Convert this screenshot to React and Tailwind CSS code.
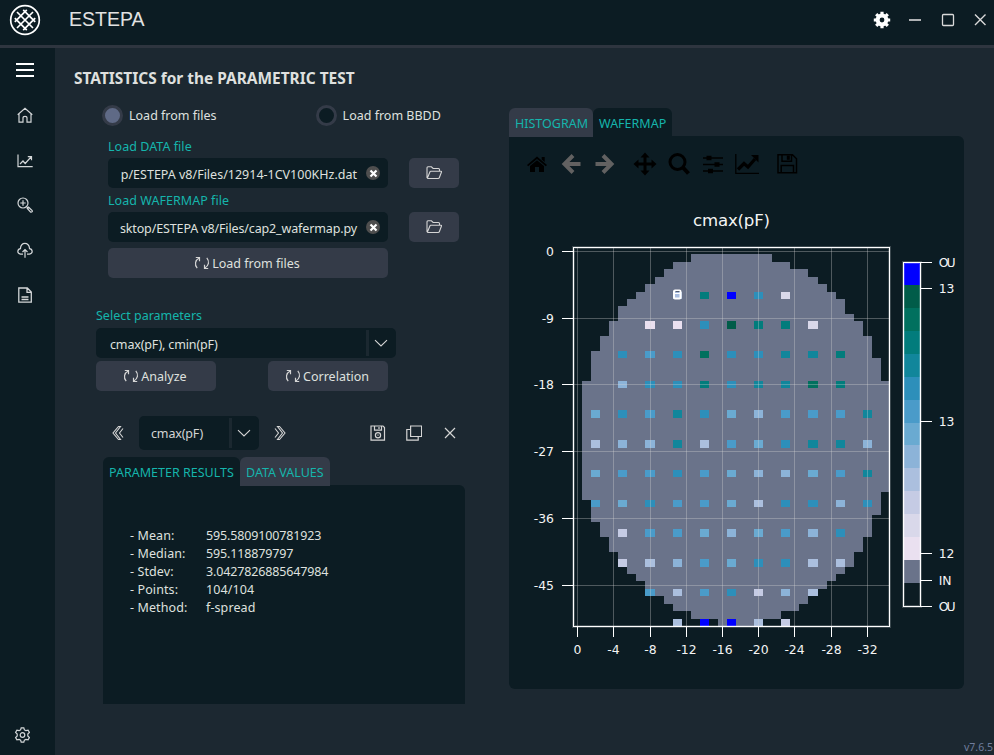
import React from 'react';

const COLORS = {
  B: '#0000ff', 1: '#015c49', 2: '#01705e', 3: '#027c7c', 4: '#11869b', 5: '#2d8fba', 6: '#4a9bc9',
  7: '#6aaad1', 8: '#8cb3d8', 9: '#abbfde', a: '#c5cbe4', b: '#d9d8ea', c: '#eae0f0',
};
const COL_X = [591, 618, 645, 673, 700, 727, 754, 781, 808, 836, 863];
const COL_W = [9, 9, 10, 9, 9, 9, 9, 9, 10, 9, 9];
const ROWS = [
  [292, 7, '...93B5b...'],
  [321, 8, '..cc5133b..'],
  [351, 7, '.565255443.'],
  [381, 7, '.855354423.'],
  [410, 8, '75645786664'],
  [440, 8, '98849675448'],
  [470, 7, '76656788764'],
  [500, 7, '67566795585'],
  [529, 8, '.a66787685.'],
  [559, 8, '.a98675599.'],
  [589, 7, '..6965a89..'],
  [619, 7, '...9BB9a...'],
];
const WAFER = [
  [254, 691, 772], [262, 673, 790], [269, 664, 808], [277, 655, 818], [284, 645, 827], [292, 636, 836],
  [299, 627, 845], [306, 618, 845], [314, 618, 854], [321, 609, 863], [336, 600, 872], [351, 591, 872],
  [358, 591, 881], [381, 582, 889], [492, 582, 881], [500, 591, 881], [515, 591, 872], [522, 600, 872],
  [537, 609, 863], [552, 618, 854], [567, 627, 845], [574, 636, 836], [581, 645, 827], [589, 645, 818],
  [596, 664, 808], [604, 673, 799], [611, 691, 781], [619, 718, 754], [626, 0, 0],
];
const XT = [577.5, 613.5, 650.5, 686.5, 722.5, 758.5, 794.5, 831.5, 867.5];
const YT = [251.5, 318.5, 384.5, 451.5, 518.5, 585.5];
const BAR = [263, 285, 308, 331, 354, 377, 400, 423, 445, 468, 491, 514, 537, 560, 583, 606];
const BAR_COLORS = ['#0000ff', '#015c49', '#01705e', '#027c7c', '#11869b', '#2d8fba', '#4a9bc9', '#6aaad1', '#8cb3d8', '#abbfde', '#c5cbe4', '#d9d8ea', '#eae0f0', '#6a738a', '#0c1c23'];
const BAR_TICKS = [[262.5, 'OU'], [288.5, '13'], [421.5, '13'], [553.5, '12'], [580.5, 'IN'], [606.5, 'OU']];

function WaferChart() {
  return (
    <svg width="448" height="476" viewBox="509 200 448 476" className="block font-['DejaVu_Sans',sans-serif]" fill="#f4f4f4">
      <text x="731.5" y="226" fontSize="16.6" textAnchor="middle" textLength="77">cmax(pF)</text>
      <g shapeRendering="crispEdges">
        {WAFER.slice(0, -1).map(([y, x1, x2], i) => (
          <rect key={y} x={x1} y={y} width={x2 - x1} height={WAFER[i + 1][0] - y} fill="#6a738a" />
        ))}
        {ROWS.map(([y, h, cells]) => [...cells].map((c, i) => c !== '.' && (
          <rect key={y + '-' + i} x={COL_X[i]} y={y} width={COL_W[i]} height={h} fill={COLORS[c]} />
        )))}
        <g fill="#d9d9d9" fillOpacity="0.33">
          {XT.map((x) => <rect key={x} x={x - 0.5} y="248" width="1" height="378" />)}
          {YT.map((y) => <rect key={y} x="574" y={y - 0.5} width="315" height="1" />)}
        </g>
        <rect x="573.5" y="247.5" width="316" height="379" fill="none" stroke="#fff" strokeOpacity="0.2" strokeWidth="3" />
        <rect x="573.5" y="247.5" width="316" height="379" fill="none" stroke="#fff" />
        {XT.map((x) => <rect key={x} x={x - 0.5} y="627" width="1" height="10" fill="#fff" />)}
        {YT.map((y) => <rect key={y} x="562" y={y - 0.5} width="11" height="1" fill="#fff" />)}
        {BAR_COLORS.map((c, i) => <rect key={c} x="904" y={BAR[i]} width="16" height={BAR[i + 1] - BAR[i]} fill={c} />)}
        <rect x="903.5" y="262.5" width="17" height="344" fill="none" stroke="#fff" strokeOpacity="0.2" strokeWidth="3" />
        <rect x="903.5" y="262.5" width="17" height="344" fill="none" stroke="#fff" />
        {BAR_TICKS.map(([y]) => <rect key={y} x="921" y={y - 0.5} width="11" height="1" fill="#fff" />)}
      </g>
      <rect x="674" y="290.5" width="6.500" height="8" rx="1" fill="#a9bde0" stroke="#fff" strokeWidth="2" />
      <path d="M675 293.5h5" stroke="#fff" />
      <path d="M675.5 291.5h4" stroke="#555e72" />
      <g fontSize="12.4">
        {XT.map((x, i) => <text key={x} x={x} y="654" textAnchor="middle">{i === 0 ? '0' : String(-4 * i)}</text>)}
        {YT.map((y, i) => <text key={y} x="554" y={y + 4.5} textAnchor="end">{i === 0 ? '0' : String(-9 * i)}</text>)}
        {BAR_TICKS.map(([y, t]) => <text key={y} x="938.7" y={y + 4.5} textLength={t === 'OU' ? 17 : undefined}>{t}</text>)}
      </g>
    </svg>
  );
}

function Icon({ size = 16, children, className = '', sw = 1, box = 16 }) {
  return (
    <svg width={size} height={size} viewBox={`0 0 ${box} ${box}`} fill="none" stroke="currentColor" strokeWidth={sw} className={`block shrink-0 ${className}`}>
      {children}
    </svg>
  );
}

const Folder = () => (
  <Icon className="-ml-px text-[#d5d5d5]" sw={1.1}>
    <path d="M1 13V2.800q0-1 1-1H5.400l1.700 1.700h5.400q1 0 1 1v1.700M1.200 13.500 4 6.700q.2-.5.8-.5h10q1 0 .7.800l-2.200 5.700q-.3.800-1.100.800H1.200" />
  </Icon>
);

const Sync = () => (
  <Icon className="text-[#d5d5d5]" sw={1.2}>
    <path d="M3.200 13.200C.2 9.700 1.200 5 5.200 3M1.800 2.500h3.700v3.700M12.800 2.800c3 3.500 2 8.200-2 10.200M14.200 13.500h-3.700V9.800" />
  </Icon>
);

function FileField({ label, value, tight }) {
  return (
    <div className="flex h-[54px] flex-col">
      <div className="h-[23px] pt-[2px] leading-[20px] tracking-[0.04px] text-[#15b5ac]">{label}</div>
      <div className="flex gap-[21px]">
        <div className="flex h-[30px] w-[280px] items-center rounded-[5px] bg-[#0c1c23] pl-[11px]">
          <div className={`flex h-5 w-[238px] justify-end whitespace-nowrap leading-[24px] ${tight ? 'tracking-[-0.130px]' : ''}`}>{value}</div>
          <div className="ml-[9px] flex h-[14px] w-[14px] items-center justify-center rounded-full bg-[#4e4e4e]">
            <Icon size={9} box={9} sw={2.2} className="text-white"><path d="m1.500 1.500 6 6M7.500 1.500l-6 6" /></Icon>
          </div>
        </div>
        <div className="flex h-[30px] w-[50px] items-center justify-center rounded-[5px] bg-[#343b48]"><Folder /></div>
      </div>
    </div>
  );
}

function Button({ children, className }) {
  return (
    <div className={`flex h-[30px] items-center justify-center gap-[2px] rounded-[5px] bg-[#343b48] pr-[2px] ${className}`}>
      <Sync /><span className="pt-[2px]">{children}</span>
    </div>
  );
}

function Combo({ text, className, arrow, lift }) {
  return (
    <div className={`flex rounded-[5px] bg-[#0c1c23] ${className}`}>
      <div className={`flex flex-1 items-center ${lift ? 'pt-[2px]' : 'pt-[4px]'}`}>{text}</div>
      <div className={`my-[2px] flex items-center border-l-[3px] border-[#1b2830] ${arrow}`}>
        <Icon className="text-[#d5d5d5]" sw={1.1}><path d="M2 5.200 8 11l6-5.800" /></Icon>
      </div>
    </div>
  );
}

function Radio({ on, children }) {
  return (
    <div className="flex items-center gap-[6px]">
      <div className={`h-[21px] w-[21px] rounded-full border-[3px] border-[#343b48] ${on ? 'bg-[#5f6a86]' : 'bg-[#0c1c23]'}`} />
      <span className="pt-[2px]">{children}</span>
    </div>
  );
}

const RESULTS = [
  ['- Mean:', '595.5809100781923'],
  ['- Median:', '595.118879797'],
  ['- Stdev:', '3.0427826885647984'],
  ['- Points:', '104/104'],
  ['- Method:', 'f-spread'],
];

function Header() {
  return (
    <header className="flex h-12 items-start border-b-[3px] border-[#2e353f] bg-[#0c1c23]">
      <svg width="32" height="32" viewBox="0 0 32 32" className="ml-[9px] mt-1 block" fill="none" stroke="#fff" strokeWidth="1.700">
        <circle cx="16" cy="16" r="14.300" />
        <path d="M8 8l16 16M24 8 8 24M5.800 14.200 17.800 26.200M14.200 5.800 26.200 17.800M26.200 14.200 14.200 26.200M17.800 5.800 5.800 17.800" />
      </svg>
      <div className="ml-7 mt-[7px] flex-1 font-['Liberation_Sans',Arial,sans-serif] text-[19.500px] leading-[25px] text-[#e2e2e2]">ESTEPA</div>
      <div className="mt-[11px] flex items-center pr-[6px] text-[#dadada]">
        <Icon size={18} box={18} className="text-white">
          <circle cx="9" cy="9" r="4.400" strokeWidth="4" />
          <path d="M9 .8v3M9 14.200v3M.8 9h3M14.200 9h3M3.200 3.200l2 2M12.800 12.800l2 2M3.200 14.800l2-2M12.800 5.200l2-2" strokeWidth="3.200" />
        </Icon>
        <Icon className="ml-[16px]" sw={1.6}><path d="M2 8h12" /></Icon>
        <Icon className="ml-[17px]" sw={1.3}><rect x="2.500" y="2.500" width="11" height="11" rx="1" /></Icon>
        <Icon className="ml-[16px]" sw={1.4}><path d="m3 2.500 10.500 10.500M13.500 2.500 3 13" /></Icon>
      </div>
    </header>
  );
}

function Sidebar() {
  return (
    <nav className="flex w-[55px] flex-col items-start bg-[#0c1c23] pl-[17px] text-[#d3d6d8]">
      <Icon size={20} box={20} sw={2} className="-ml-[2px] mt-[12px] text-white"><path d="M1 4h18M1 10h18M1 16h18" /></Icon>
      <Icon className="mt-[27px]" sw={1.2}><path d="M.7 7.800 8 1.200l7.300 6.600M2 7v8.200h4V11q0-1.700 2-1.700t2 1.700v4.200h4V7" /></Icon>
      <Icon className="mt-[30px]" sw={1.200}><path d="M1 1.500V13.700h14.700M3 11l3-3 2.200 2.500L14 4M10.800 3.600h3.700v3.700" /></Icon>
      <Icon className="mt-[28px]" sw={1.200}><circle cx="6" cy="6" r="5" /><path d="M6 3.300v5.400M3.300 6h5.400M9.600 9.600l1 1M10.300 11.500l1.300-1.300 3.600 3.400q.3.900-.2 1.300t-1.300.2z" /></Icon>
      <Icon className="mt-[29px]" sw={1.200}><path d="M6 12.200H3.500C-.3 11.500.2 7.200 3.500 6.700 3.200-.3 12.600-.3 12.500 6.700c3.300.5 3.800 4.800 0 5.500H10M8 15.700V8M5.500 10 8 7.500l2.500 2.500" /></Icon>
      <Icon className="mt-[29px]" sw={1.300}><path d="M1.800 1h8.500l4 4v10.200H1.800zM10 1.200V5.300h4M4.500 10h7M4.500 12.500h7" /></Icon>
      <Icon className="-ml-[3px] mt-[424px]" sw={1.200}>
        <circle cx="8.500" cy="8" r="2.300" />
        <path d="M7.200.8h2.600l.6 2.100 1.500.8 2.200-.6 1.300 2.300L13.800 7v2l1.600 1.600-1.300 2.300-2.200-.6-1.500.8-.6 2.100H7.200l-.6-2.100-1.500-.8-2.200.6-1.300-2.300L3.200 9V7L1.600 5.400l1.300-2.300 2.200.6 1.500-.8z" />
      </Icon>
    </nav>
  );
}

function ChartToolbar() {
  return (
    <div className="flex h-[54px] items-center pl-4 pt-px text-black">
      <Icon size={24} box={24}><path fill="currentColor" stroke="none" d="M2 13 12 4.500 22 13l-1.200 1.300L12 7 3.200 14.300zM16.700 5h3v5l-3-2.600zM5 14l7-5.700L19 14v6h-5v-5h-4v5H5z" /></Icon>
      <Icon size={24} box={24} sw={4} className="ml-[10px] text-[#626161]"><path d="M14 3.500 5.500 12l8.500 8.500M5.500 12h16" /></Icon>
      <Icon size={24} box={24} sw={4} className="ml-[10px] text-[#626161]"><path d="M10 3.500 18.500 12l-8.500 8.500M18.500 12H2.500" /></Icon>
      <Icon size={24} box={24} className="ml-[16px]"><path d="M12 3v18M3 12h18" strokeWidth="3" /><path fill="currentColor" stroke="none" d="m12 .5 4.500 5h-9zM12 23.500l4.500-5h-9zM.5 12l5-4.500v9zM23.500 12l-5-4.500v9z" /></Icon>
      <Icon size={24} box={24} sw={3} className="ml-[10px]"><circle cx="10.500" cy="10" r="7.500" /><path d="m15.500 15 6 6.500" strokeWidth="4" /></Icon>
      <Icon size={24} box={24} sw={1.300} className="ml-[10px]"><path d="M2 6h20M2 12.500h20M2 19h20" /><path d="M8 3.700v4.600M16 10.200v4.600M9.500 16.700v4.600" strokeWidth="5" /></Icon>
      <Icon size={24} box={24} className="ml-[10px]"><path d="M.8 2v19.300h23.200" strokeWidth="1.300" /><path d="m3 17.500 6-6 4 3.500 7-8" strokeWidth="3.300" /><path fill="currentColor" stroke="none" d="M16 3H23.500v7.500z" /></Icon>
      <Icon size={24} box={24} sw={1.500} className="ml-[16px]"><path d="M3 2.800h14.500l4 4v14H3zM6.200 21v-7.500h12.300V21M7 3v6.300h9.500V3" /><path d="M13.300 3.500v4.300" strokeWidth="3" /></Icon>
    </div>
  );
}

export default function App() {
  return (
    <div className="flex h-[755px] w-[994px] flex-col overflow-hidden bg-[#1c2831] font-['Noto_Sans',sans-serif] text-[12.500px] text-[#dfe0df]">
      <Header />
      <div className="flex flex-1">
        <Sidebar />
        <main className="flex flex-1 pl-[19px]">
          <section className="w-[435px] pt-[19px]">
            <h1 className="h-[38px] whitespace-nowrap text-[15.450px] font-bold leading-[22px]">STATISTICS for the PARAMETRIC TEST</h1>
            <div className="flex h-[21px] gap-[99px] pl-[28px]">
              <Radio on>Load from files</Radio>
              <Radio>Load from BBDD</Radio>
            </div>
            <div className="pl-[34px] pt-[9px]">
              <FileField label="Load DATA file" value="p/ESTEPA v8/Files/12914-1CV100KHz.dat" />
              <FileField tight label="Load WAFERMAP file" value="sktop/ESTEPA v8/Files/cap2_wafermap.py" />
              <Button className="mt-[5px] w-[280px]">Load from files</Button>
            </div>
            <div className="pl-[22px] pt-[27px]">
              <div className="h-[23px] leading-[22px] text-[#15b5ac]">Select parameters</div>
              <Combo text="cmax(pF), cmin(pF)" className="h-[30px] w-[300px] pl-[14px] tracking-[-0.150px]" arrow="w-[30px] pl-[4px]" />
              <div className="mt-[3px] flex gap-[52px]">
                <Button className="w-[120px]">Analyze</Button>
                <Button className="w-[120px]">Correlation</Button>
              </div>
            </div>
            <div className="mt-[25px] flex items-center pl-[36px] text-[#d5d5d5]">
              <Icon sw={1.100}><path d="M8.500 1.500h2L5.500 8l5 6.500h-2L3 8zM13 3.500 9.500 8l3.500 4.500" /></Icon>
              <Combo lift text="cmax(pF)" className="ml-[13px] h-[34px] w-[120px] pl-3 tracking-[-0.150px]" arrow="w-[30px] pl-[4px]" />
              <Icon className="ml-[13px]" sw={1.100}><path d="M7.500 1.500h-2L10.500 8l-5 6.500h2L13 8zM3 3.500 6.500 8 3 12.500" /></Icon>
              <Icon className="ml-[82px]" sw={1.200}><path d="M1 1h12l1.500 1.500v12.700H1zM4.500 1v4.200h7V1M9 2v2" /><circle cx="8" cy="10.200" r="2.600" /><path d="M7.500 10.200h1" /></Icon>
              <Icon className="ml-[20px]" sw={1.200}><path d="M4.600 1h11v10.500h-11zM4.600 4.500H.8v10.700h11.400v-3.700" /></Icon>
              <Icon className="ml-[20px]" sw={1.200}><path d="m3 3 10 10M13 3 3 13" /></Icon>
            </div>
            <div className="mt-[7px] pl-[29px]">
              <div className="flex h-[28px] leading-[31px] text-[#15b5ac]">
                <div className="w-[137px] whitespace-nowrap rounded-t-[6px] bg-[#0c1c23] pl-[6px]">PARAMETER RESULTS</div>
                <div className="h-[29px] w-[90px] whitespace-nowrap rounded-t-[6px] bg-[#343b48] pl-[6px]">DATA VALUES</div>
              </div>
              <div className="h-[219px] w-[362px] rounded-tr-[6px] bg-[#0c1c23] pl-[27px] pt-[41px]">
                {RESULTS.map(([k, v], i) => (
                  <div key={k} className="flex h-[18px] leading-[20px]">
                    <div className="w-[76px] tracking-[0.100px]">{k}</div>
                    <div className={i < 3 ? 'tracking-[-0.150px]' : 'tracking-[0.100px]'}>{v}</div>
                  </div>
                ))}
              </div>
            </div>
          </section>
          <section className="flex-1 pt-[60px]">
            <div className="flex h-[28px] leading-[31px] text-[#15b5ac]">
              <div className="h-[29px] w-[84px] rounded-t-[6px] bg-[#343b48] pl-[6px]">HISTOGRAM</div>
              <div className="w-[79px] rounded-t-[6px] bg-[#0c1c23] pl-[6px]">WAFERMAP</div>
            </div>
            <div className="h-[553px] w-[455px] rounded-b-[6px] rounded-tr-[6px] bg-[#0c1c23]">
              <ChartToolbar />
              <div className="pt-[10px]"><WaferChart /></div>
            </div>
            <div className="mt-[50px] pr-px text-right text-[10.500px] leading-4 text-[#6f7d9c]">v7.6.5</div>
          </section>
        </main>
      </div>
    </div>
  );
}
